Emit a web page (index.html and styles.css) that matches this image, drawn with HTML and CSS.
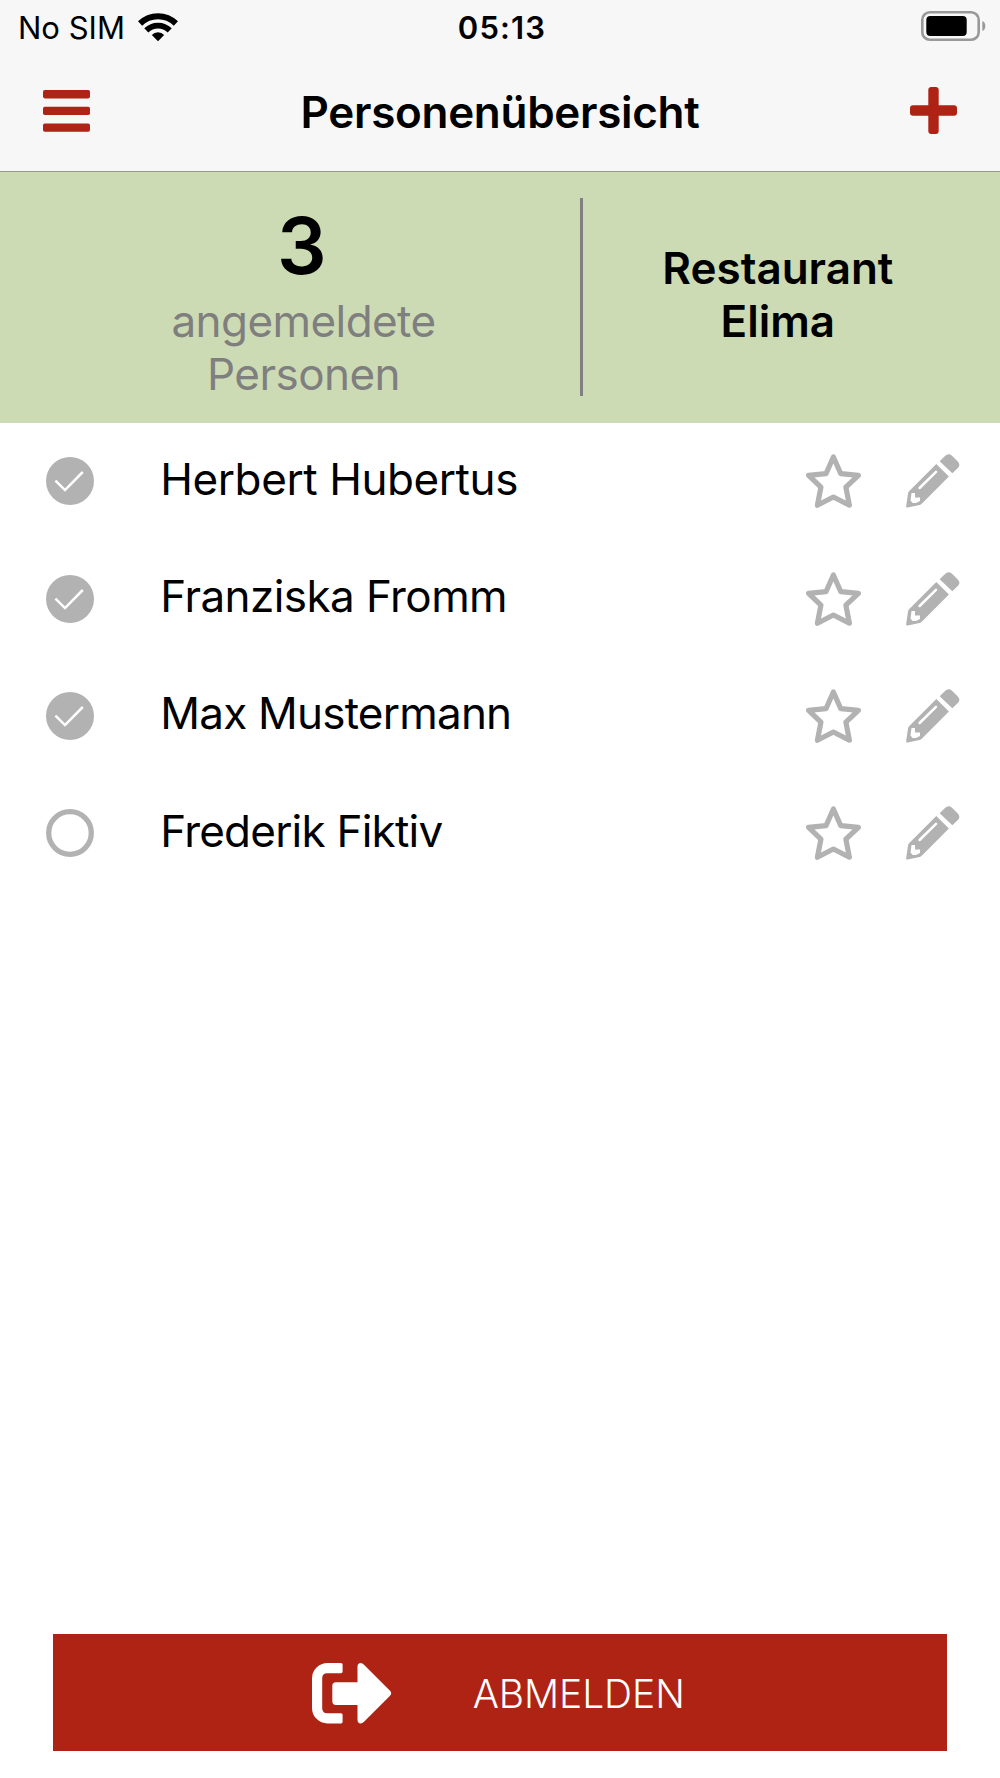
FILE: index.html
```html
<!DOCTYPE html>
<html lang="de">
<head>
<meta charset="utf-8">
<title>Personenübersicht</title>
<link rel="stylesheet" href="styles.css">
</head>
<body>
<svg class="sprite" aria-hidden="true">
  <symbol id="checked" viewBox="0 0 48 48">
    <circle cx="24" cy="24" r="24" fill="#b2b2b2"/>
    <path d="M9.4 23.6 19 33.1 36.8 15" fill="none" stroke="#fff" stroke-width="2.5"/>
  </symbol>
  <symbol id="unchecked" viewBox="0 0 48 48">
    <circle cx="24" cy="24" r="21.3" fill="none" stroke="#b2b2b2" stroke-width="5.3"/>
  </symbol>
  <symbol id="star" viewBox="0 0 55 54">
    <path d="M27.4 3 34.8 19.7 52.4 21.3 39.9 33.2 43.4 51.2 27.4 43 11.4 51.2 14.9 33.2 2.6 21.3 20 19.7Z" fill="none" stroke="#b2b2b2" stroke-width="5.2" stroke-linejoin="round"/>
  </symbol>
  <symbol id="pencil" viewBox="0 0 54 54">
    <path d="M30.3 10 42.9 22.5 16 49.6Q15 50.7 13.5 51L1.6 53.6Q0 53.8.2 52L2 39.5Q2.2 38 3.3 37ZM33.7 7.3 39 2Q42.5-1.2 46 1.8L51.8 7.5Q55 11.2 51.8 14L46.3 19.3Z" fill="#b2b2b2"/>
    <path d="M13.6 34 30 17.8" stroke="#fff" stroke-width="2.5" stroke-linecap="round"/>
    <path d="M5.5 39H9V43.6H14V47L10 49H6.5L4.5 46.5Z" fill="#fff"/>
  </symbol>
</svg>
<div class="screen">
  <header class="top">
    <div class="status">
      <div class="carrier"><span>No SIM</span>
        <svg class="wifi" width="40" height="30" viewBox="0 0 40 30"><g fill="none" stroke="#000"><path d="M2.1 11.5A25.6 25.6 0 0 1 37.9 11.5" stroke-width="6"/><path d="M8.3 18.4A16.6 16.6 0 0 1 31.7 18.4" stroke-width="5.8"/></g><path d="M20 29.2 13.8 22.9A8.8 8.8 0 0 1 26.2 22.9Z"/></svg>
      </div>
      <span class="time">05:13</span>
      <svg class="battery" width="65" height="30" viewBox="0 0 65 30"><rect x="1.3" y="1.3" width="56.4" height="27.4" rx="7.5" fill="none" stroke="#999" stroke-width="2.6"/><rect x="5.3" y="5" width="40.4" height="20" rx="4"/><path d="M61.3 10Q64.3 11 64.3 15T61.3 20Z" fill="#999"/></svg>
    </div>
    <nav class="nav">
      <svg class="menu" width="47" height="42" viewBox="0 0 47 42" fill="#af2315"><rect width="47" height="8.4" rx="1.8"/><rect y="16.7" width="47" height="8.4" rx="1.8"/><rect y="33.4" width="47" height="8.4" rx="1.8"/></svg>
      <h1 class="title">Personenübersicht</h1>
      <svg class="plus" width="47" height="47" viewBox="0 0 47 47" fill="#af2315"><rect x="18.3" width="10.4" height="47" rx="3"/><rect y="18.3" width="47" height="10.4" rx="3"/></svg>
    </nav>
  </header>
  <section class="summary">
    <div class="count">
      <strong class="number">3</strong>
      <span class="label">angemeldete<br>Personen</span>
    </div>
    <div class="divider"></div>
    <div class="place">Restaurant<br>Elima</div>
  </section>
  <ul class="people">
    <li class="person"><svg class="state"><use href="#checked"/></svg><span class="name">Herbert Hubertus</span><svg class="star"><use href="#star"/></svg><svg class="pencil"><use href="#pencil"/></svg></li>
    <li class="person"><svg class="state"><use href="#checked"/></svg><span class="name">Franziska Fromm</span><svg class="star"><use href="#star"/></svg><svg class="pencil"><use href="#pencil"/></svg></li>
    <li class="person"><svg class="state"><use href="#checked"/></svg><span class="name">Max Mustermann</span><svg class="star"><use href="#star"/></svg><svg class="pencil"><use href="#pencil"/></svg></li>
    <li class="person"><svg class="state"><use href="#unchecked"/></svg><span class="name">Frederik Fiktiv</span><svg class="star"><use href="#star"/></svg><svg class="pencil"><use href="#pencil"/></svg></li>
  </ul>
  <button class="logout">
    <svg width="80" height="61" viewBox="0 0 80 61" fill="#fff"><path d="M29 0Q30.6 0 30.6 1.6V8.6Q30.6 10.2 29 10.2H15.2Q10.2 10.2 10.2 15.2V45.2Q10.2 50.2 15.2 50.2H29Q30.6 50.2 30.6 51.8V58.8Q30.6 60.4 29 60.4H15.5A15.5 15.5 0 0 1 0 44.9V15.5A15.5 15.5 0 0 1 15.5 0Z"/><path d="M45.5 19.3V3.6Q45.5 0 48.8 0 50.3 0 52 1.7L78 27.7Q80.4 30.2 78 32.7L52 58.7Q50.3 60.4 48.8 60.4 45.5 60.4 45.5 56.8V41.9H24Q20.3 41.9 20.3 38.2V23Q20.3 19.3 24 19.3Z"/></svg>
    <span>ABMELDEN</span>
  </button>
</div>
</body>
</html>
```
FILE: styles.css
```css
* { box-sizing: border-box; }
body { margin: 0; background: #fff; color: #000; font-family: Inter, "Liberation Sans", sans-serif; }
svg { display: block; flex: none; }
.sprite { position: absolute; width: 0; height: 0; }
.screen { display: flex; flex-direction: column; height: 1778px; overflow: hidden; }

.top { height: 172px; background: #f7f7f7; border-bottom: 1.33px solid #929b88; }
.status { display: grid; grid-template-columns: 1fr auto 1fr; align-items: center; height: 53.3px; padding: 0 14px 0 18px; font-size: 31px; }
.carrier { display: flex; align-items: center; gap: 13.5px; }
.carrier span, .time { padding-top: 2px; }
.time { font-weight: 600; letter-spacing: 1.15px; }
.battery { justify-self: end; margin-bottom: 1px; }
.nav { display: grid; grid-template-columns: 1fr auto 1fr; align-items: center; height: 115.4px; padding: 0 42.7px; }
.title { margin: 0; padding-top: 4px; font-size: 44px; font-weight: 600; line-height: 53.3px; letter-spacing: -.3px; }
.plus { justify-self: end; }

.summary { display: flex; height: 250.6px; padding: 25.5px 27px; background: #cddbb4; font-size: 44px; line-height: 53.4px; text-align: center; }
.count { flex: none; display: flex; flex-direction: column; gap: 5px; width: 553px; padding-top: 3.5px; }
.number { padding-right: 3.6px; font-size: 78px; font-weight: 600; line-height: 89px; }
.label { color: #7f7f7f; letter-spacing: -.56px; }
.divider { width: 2.7px; height: 198.5px; background: #808080; }
.place { flex: 1; padding-top: 44px; font-weight: 600; }

.people { margin: 0; padding: 0; list-style: none; }
.person { display: flex; align-items: center; height: 117.33px; padding: 0 39.7px 0 45.7px; }
.state { width: 48px; height: 48px; }
.name { flex: 1; padding: 0 0 4px 66.6px; font-size: 44px; line-height: 53.3px; letter-spacing: -.42px; }
.person:nth-child(2) .name { letter-spacing: -.57px; }
.person:nth-child(3) .name { letter-spacing: -.78px; }
.person:nth-child(4) .name { letter-spacing: -.78px; }
.star { width: 55px; height: 54px; margin-right: 45.5px; }
.pencil { width: 54px; height: 54px; }

.logout { display: flex; align-items: center; height: 117.4px; margin: auto 53.2px 26.8px 53.3px; padding: 1px 0 0 258.4px; gap: 81px; border: 0; background: #af2315; color: #fff; font: 350 39px Inter, "Liberation Sans", sans-serif; }
.logout span { padding-top: 1px; letter-spacing: -.1px; }
```
